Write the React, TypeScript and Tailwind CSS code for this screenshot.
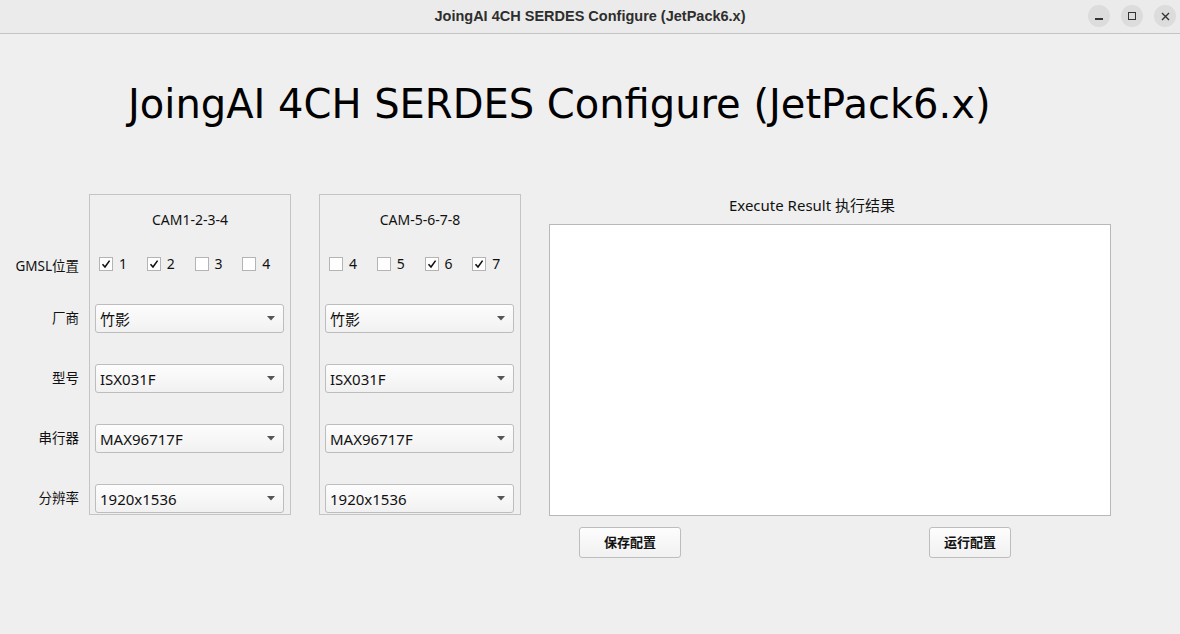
import React from 'react';

const rowLabels = ['厂商', '型号', '串行器', '分辨率'];

const CheckBox = ({ checked, label }: { checked: boolean; label: string }) => (
  <div className="flex items-center w-[50px]">
    <div className="w-[14px] h-[14px] bg-white border border-[#b4b4b4] flex items-center justify-center">
      {checked && (
        <svg width="10" height="10" viewBox="0 0 10 10">
          <path d="M1.5 5.2 L4 8 L8.6 1.6" fill="none" stroke="#111" strokeWidth="1.6" />
        </svg>
      )}
    </div>
    <span className="ml-[6px] text-[14px] leading-none text-[#111]">{label}</span>
  </div>
);

const Combo = ({ value }: { value: string }) => (
  <div className="w-[189px] h-[29px] ml-[5px] flex items-center justify-between pl-[4px] pr-[8px] rounded-[3px] border border-[#bdbdbd] bg-gradient-to-b from-[#fdfdfd] to-[#f1f1f1] text-[15px] text-[#111]">
    <span className="mt-[1px]">{value}</span>
    <svg width="8" height="5" viewBox="0 0 8 5">
      <path d="M0 0 H8 L4 4.5 Z" fill="#555" />
    </svg>
  </div>
);

const CamGroup = ({
  title,
  boxes,
  values,
}: {
  title: string;
  boxes: { label: string; checked: boolean }[];
  values: string[];
}) => (
  <div className="w-[202px] h-[321px] border border-[#c4c4c4] flex flex-col">
    <div className="h-[48px] flex items-center justify-center text-[14px] text-[#111]">{title}</div>
    <div className="h-[42px] flex items-center pl-[9px]">
      {boxes.map((b) => (
        <CheckBox key={b.label} checked={b.checked} label={b.label} />
      ))}
    </div>
    <div className="flex flex-col gap-[31px] pt-[19px]">
      {values.map((v, i) => (
        <Combo key={i} value={v} />
      ))}
    </div>
  </div>
);

const WinButton = ({ children }: { children: React.ReactNode }) => (
  <div className="w-[22px] h-[22px] rounded-full bg-[#dcdcdc] flex items-center justify-center">{children}</div>
);

export default function App() {
  return (
    <div
      className="w-[1180px] h-[634px] bg-[#efefef] overflow-hidden flex flex-col"
      style={{ fontFamily: '"Noto Sans", "Noto Sans CJK SC", sans-serif' }}
    >
      {/* title bar */}
      <div className="h-[34px] shrink-0 bg-[#ebebeb] border-b border-[#c4c4c4] flex items-center relative">
        <div
          className="flex-1 text-center text-[14.5px] font-bold text-[#2e2e2e]"
          style={{ fontFamily: '"Liberation Sans", "Noto Sans CJK SC", sans-serif' }}
        >
          JoingAI 4CH SERDES Configure (JetPack6.x)
        </div>
        <div className="absolute right-[4px] top-[5px] flex gap-[11px]">
          <WinButton>
            <div className="w-[8px] h-[1.5px] bg-[#333] mt-[6px]" />
          </WinButton>
          <WinButton>
            <div className="w-[8px] h-[8px] border border-[#333]" />
          </WinButton>
          <WinButton>
            <svg width="9" height="9" viewBox="0 0 9 9">
              <path d="M1 1 L8 8 M8 1 L1 8" stroke="#333" strokeWidth="1.4" />
            </svg>
          </WinButton>
        </div>
      </div>

      {/* heading */}
      <div
        className="pt-[45px] pl-[128px] text-[40px] leading-[50px] text-black"
        style={{ fontFamily: '"DejaVu Sans", sans-serif' }}
      >
        JoingAI 4CH SERDES Configure (JetPack6.x)
      </div>

      {/* main row */}
      <div className="flex mt-[65px]">
        <div className="w-[89px] flex flex-col items-end pr-[10px] text-[13.5px] text-[#111]">
          <div className="h-[51px]" />
          <div className="h-[40px] flex items-center mt-[1px]">GMSL位置</div>
          <div className="flex flex-col items-end gap-[31px] pt-[18px]">
            {rowLabels.map((l) => (
              <div key={l} className="h-[29px] flex items-center">
                {l}
              </div>
            ))}
          </div>
        </div>

        <CamGroup
          title="CAM1-2-3-4"
          boxes={[
            { label: '1', checked: true },
            { label: '2', checked: true },
            { label: '3', checked: false },
            { label: '4', checked: false },
          ]}
          values={['竹影', 'ISX031F', 'MAX96717F', '1920x1536']}
        />
        <div className="w-[28px]" />
        <CamGroup
          title="CAM-5-6-7-8"
          boxes={[
            { label: '4', checked: false },
            { label: '5', checked: false },
            { label: '6', checked: true },
            { label: '7', checked: true },
          ]}
          values={['竹影', 'ISX031F', 'MAX96717F', '1920x1536']}
        />
        <div className="w-[28px]" />

        <div className="flex flex-col w-[562px]">
          <div className="h-[23px] mb-[7px] pr-[36px] flex items-center justify-center text-[15px] text-[#111]">
            Execute Result 执行结果
          </div>
          <div className="h-[292px] bg-white border border-[#b9b9b9]" />
          <div className="flex justify-between mt-[11px] pl-[30px] pr-[100px]">
            <button className="w-[102px] h-[31px] rounded-[3px] border border-[#bdbdbd] bg-gradient-to-b from-[#fdfdfd] to-[#f1f1f1] text-[13px] font-bold text-[#111]">
              保存配置
            </button>
            <button className="w-[82px] h-[31px] rounded-[3px] border border-[#bdbdbd] bg-gradient-to-b from-[#fdfdfd] to-[#f1f1f1] text-[13px] font-bold text-[#111]">
              运行配置
            </button>
          </div>
        </div>
      </div>
    </div>
  );
}
